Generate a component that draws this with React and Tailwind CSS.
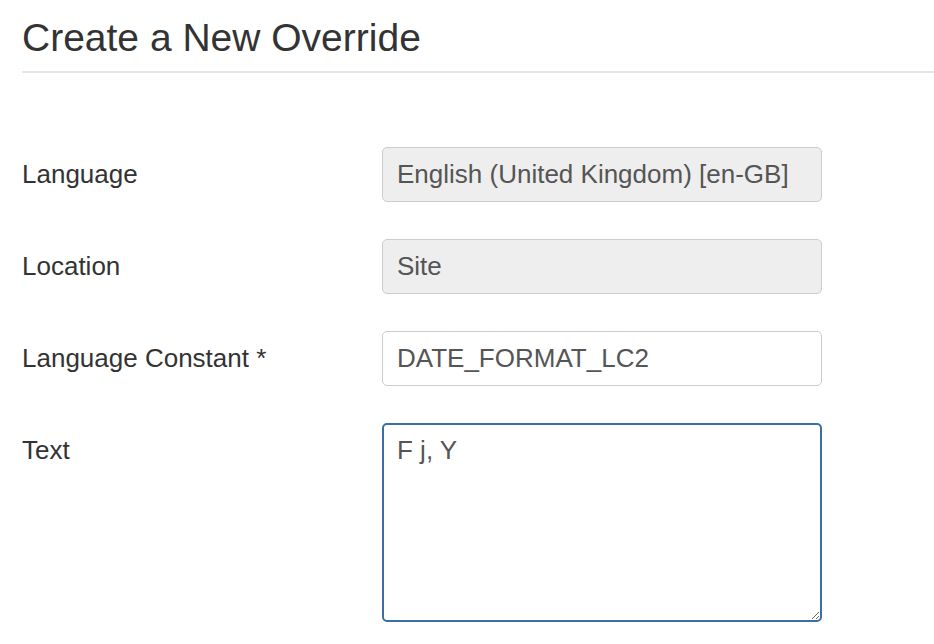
export default function App() {
  const rows = [
    { label: 'Language', value: 'English (United Kingdom) [en-GB]', readOnly: true },
    { label: 'Location', value: 'Site', readOnly: true },
    { label: 'Language Constant *', value: 'DATE_FORMAT_LC2', readOnly: false },
  ];

  return (
    <div className="w-[934px] h-[644px] overflow-hidden bg-white pl-[22px] font-['Liberation_Sans',Arial,sans-serif]">
      <h1 className="pt-[15px] pb-[10px] text-[39px] leading-[46px] text-[#333] border-b-2 border-[#e5e5e5]">
        Create a New Override
      </h1>

      <form className="mt-[74px] flex flex-col gap-[37px]">
        {rows.map(row => (
          <div key={row.label} className="flex items-start">
            <label className="w-[360px] shrink-0 pt-[12px] text-[26px] leading-[30px] text-[#333]">{row.label}</label>
            <input
              type="text"
              defaultValue={row.value}
              readOnly={row.readOnly}
              className={`w-[440px] h-[55px] px-[14px] text-[26px] text-[#555] border border-[#ccc] rounded-[5px] outline-none ${row.readOnly ? 'bg-[#eee]' : 'bg-white'}`}
            />
          </div>
        ))}

        <div className="flex items-start">
          <label className="w-[360px] shrink-0 pt-[12px] text-[26px] leading-[30px] text-[#333]">Text</label>
          <textarea
            defaultValue="F j, Y"
            className="w-[440px] h-[199px] px-[13px] pt-[10px] text-[26px] leading-[30px] text-[#555] border-2 border-[#3a6ea5] rounded-[5px] outline-none resize"
          />
        </div>
      </form>
    </div>
  );
}
